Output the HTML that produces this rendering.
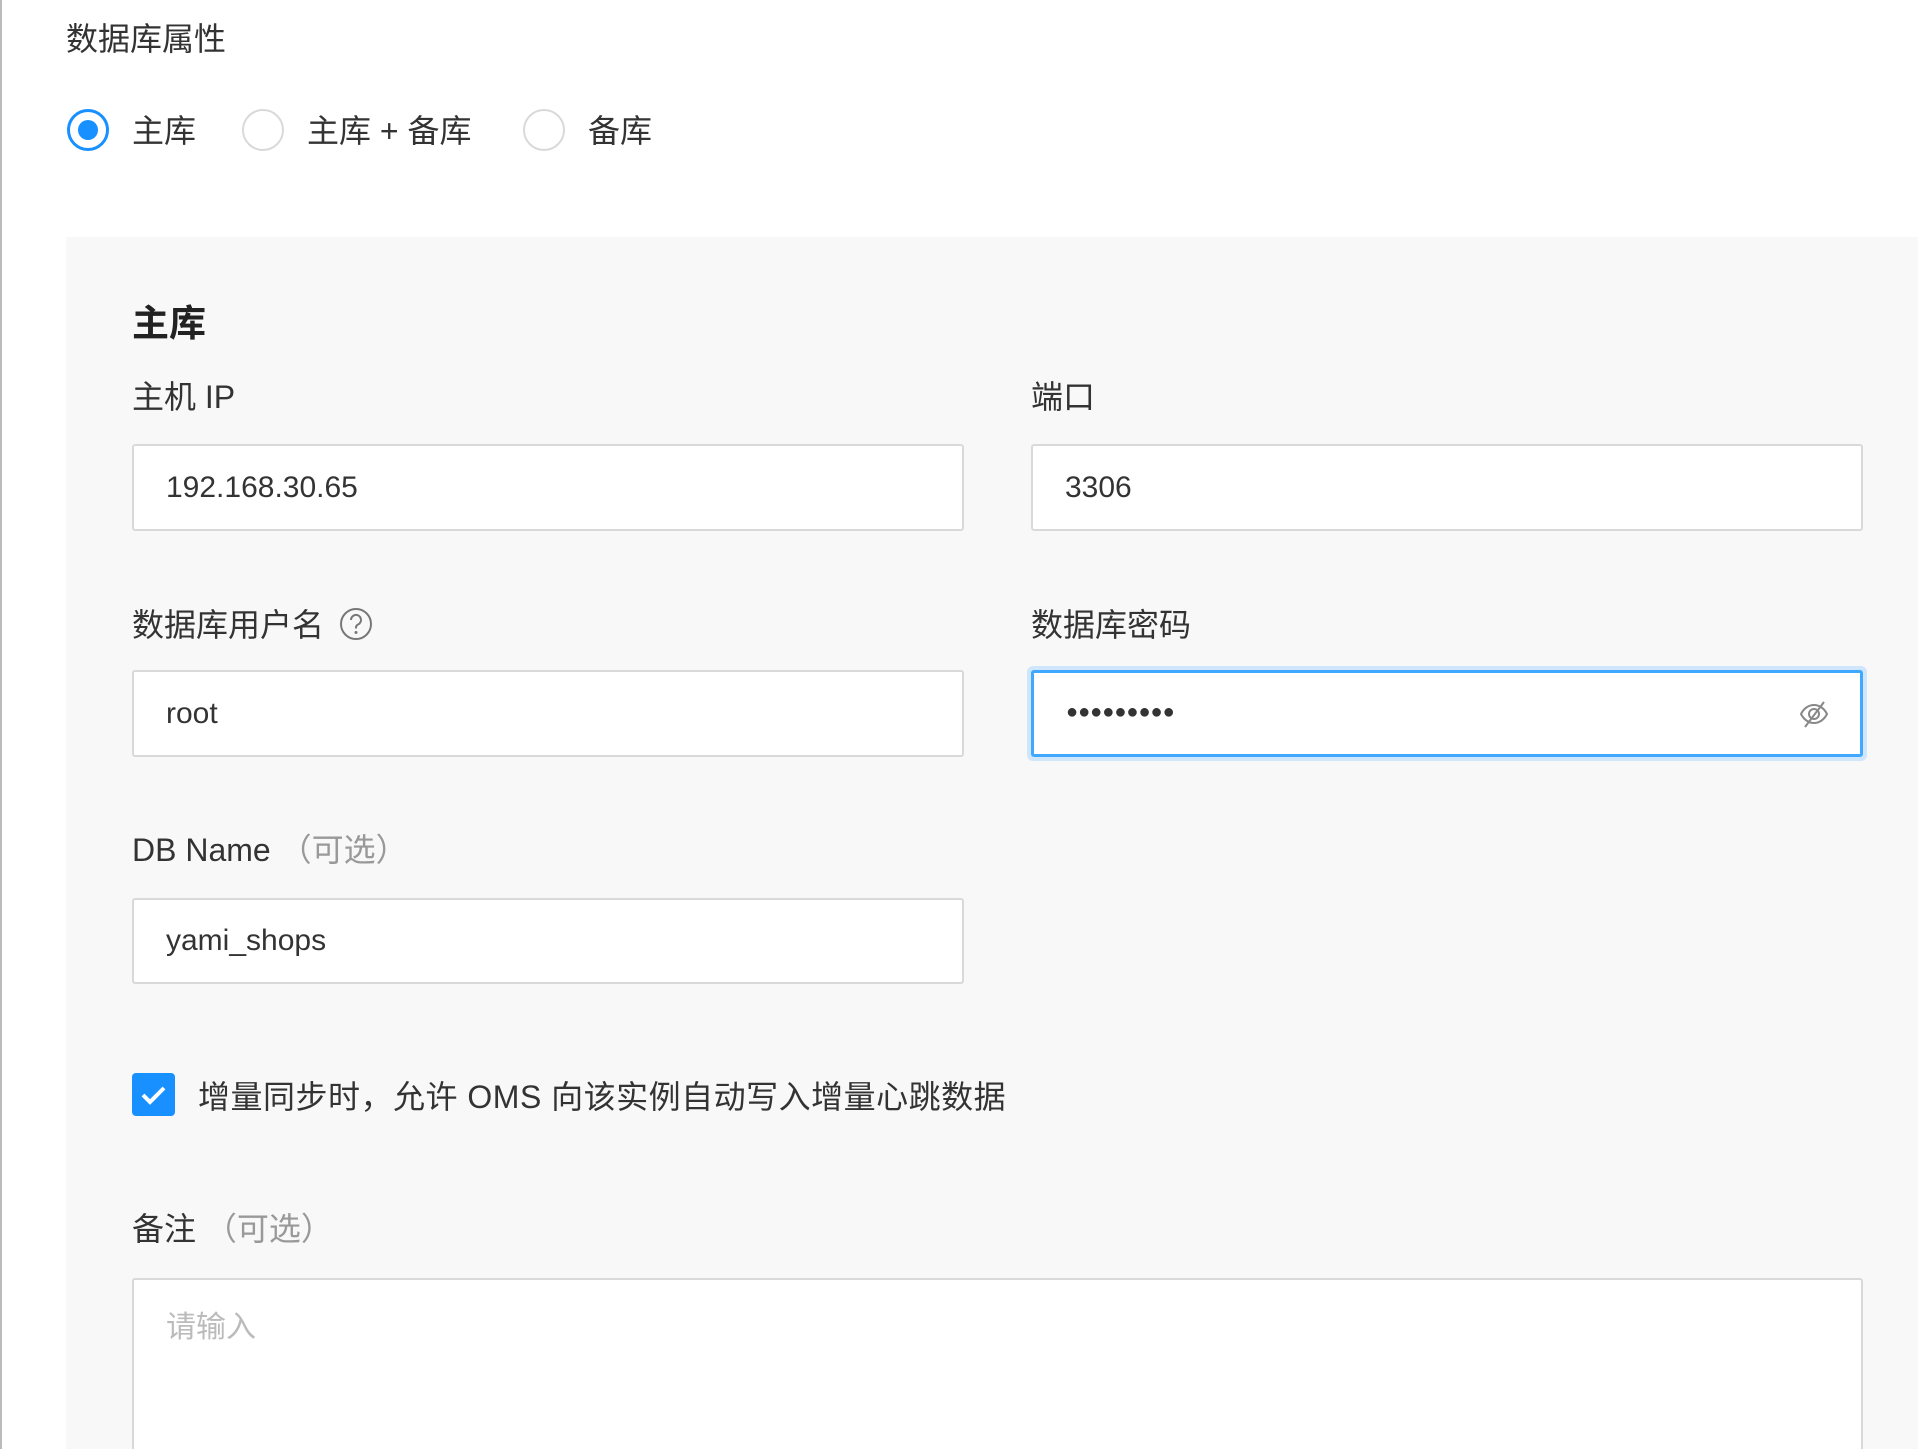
<!DOCTYPE html>
<html style="overflow:hidden"><head><meta charset="utf-8"><style>
html,body{margin:0;width:1918px;height:1449px;overflow:hidden}
body{background:#fff;font-family:"Liberation Sans","Noto Sans CJK SC",sans-serif;color:#333;position:relative}
.a{position:absolute;white-space:nowrap;line-height:1}
.t{font-size:32px;color:#333}
.inp{position:absolute;background:#fff;border:2px solid #d9d9d9;border-radius:3px;box-sizing:border-box;font-size:30px;color:#333;padding-left:32px;display:flex;align-items:center}
.radio{position:absolute;width:42px;height:42px;border-radius:50%;border:2px solid #d9d9d9;box-sizing:border-box;background:#fff}
</style></head><body>
<div style="position:absolute;left:0;top:0;width:2px;height:1449px;background:#bbb"></div>
<div class="a t" style="left:66px;top:23px">数据库属性</div>
<div class="radio" style="left:67px;top:109px;border:3px solid #1890ff"><div style="position:absolute;left:8px;top:8px;width:20px;height:20px;border-radius:50%;background:#1890ff"></div></div>
<div class="a t" style="left:132px;top:115px">主库</div>
<div class="radio" style="left:242px;top:109px"></div>
<div class="a t" style="left:307px;top:115px">主库 + 备库</div>
<div class="radio" style="left:523px;top:109px"></div>
<div class="a t" style="left:588px;top:115px">备库</div>
<div style="position:absolute;left:66px;top:237px;width:1852px;height:1212px;background:#f8f8f8"></div>
<div class="a" style="left:132px;top:305px;font-size:37px;font-weight:bold;color:#222">主库</div>
<div class="a t" style="left:132px;top:381px">主机 IP</div>
<div class="a t" style="left:1031px;top:381px">端口</div>
<div class="inp" style="left:132px;top:444px;width:832px;height:87px">192.168.30.65</div>
<div class="inp" style="left:1031px;top:444px;width:832px;height:87px">3306</div>
<div class="a t" style="left:132px;top:609px">数据库用户名</div>
<svg style="position:absolute;left:339px;top:607px" width="34" height="34" viewBox="0 0 34 34"><circle cx="17" cy="17" r="15" fill="none" stroke="#777" stroke-width="2"/><path d="M12 13a5 5 0 1 1 7 4.5c-1.5.7-2 1.5-2 3v1" fill="none" stroke="#777" stroke-width="2"/><circle cx="17" cy="25.5" r="1.5" fill="#777"/></svg>
<div class="a t" style="left:1031px;top:609px">数据库密码</div>
<div class="inp" style="left:132px;top:670px;width:832px;height:87px">root</div>
<div style="position:absolute;left:1027px;top:666px;width:840px;height:95px;border-radius:6px;background:#cfe6fc"></div>
<div class="inp" style="left:1031px;top:670px;width:832px;height:87px;border:3px solid #40a9ff;font-size:20px;letter-spacing:0px;padding-bottom:2px">●●●●●●●●●</div>
<svg style="position:absolute;left:1798px;top:698px" width="32" height="32" viewBox="0 0 32 32"><path d="M3 16c3-6 8-9 13-9s10 3 13 9c-3 6-8 9-13 9S6 22 3 16z" fill="none" stroke="#888" stroke-width="2"/><circle cx="16" cy="16" r="5" fill="none" stroke="#888" stroke-width="2"/><path d="M26 4L7 29" stroke="#888" stroke-width="2"/></svg>
<div class="a t" style="left:132px;top:834px">DB Name <span style="color:#999">（可选）</span></div>
<div class="inp" style="left:132px;top:898px;width:832px;height:86px">yami_shops</div>
<div style="position:absolute;left:132px;top:1073px;width:43px;height:43px;border-radius:4px;background:#1890ff"><svg width="43" height="43" viewBox="0 0 43 43"><path d="M11 22l7 7 14-14" fill="none" stroke="#fff" stroke-width="4"/></svg></div>
<div class="a t" style="left:198px;top:1081px;letter-spacing:0.5px">增量同步时，允许 OMS 向该实例自动写入增量心跳数据</div>
<div class="a t" style="left:132px;top:1213px">备注 <span style="color:#999">（可选）</span></div>
<div class="inp" style="left:132px;top:1278px;width:1731px;height:171px;border-bottom:none;border-radius:3px 3px 0 0;align-items:flex-start;padding-top:22px;color:#bbb">请输入</div>
</body></html>
